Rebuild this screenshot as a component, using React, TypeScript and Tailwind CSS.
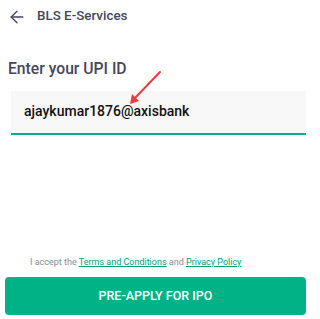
import { ArrowLeft } from 'lucide-react';

export default function App() {
  return (
    <div className="w-[311px] h-[319px] bg-white flex flex-col font-['Roboto',sans-serif] text-[#44475b] relative overflow-hidden">
      {/* Header */}
      <div className="flex items-center h-[33px] pl-[7px] gap-[10px]">
        <ArrowLeft className="w-[20px] h-[20px] text-[#44475b]" strokeWidth={1.6} />
        <span className="text-[13.4px] font-medium text-[#44475b]">BLS E-Services</span>
      </div>

      {/* Label */}
      <div className="mt-[24px] pl-[8px] text-[15.7px] font-medium text-[#44475b]">Enter your UPI ID</div>

      {/* Input */}
      <div className="mt-[10px] ml-[11px] mr-[5px] h-[44px] bg-[#f8f8f8] border-b-2 border-[#00b386] flex items-center pl-[13px]">
        <span className="text-[14px] font-medium text-[#121212]">ajaykumar1876@axisbank</span>
      </div>

      <div className="flex-1" />

      {/* Terms */}
      <div className="text-[9px] text-[#8a8c98] pl-[30px] mb-[8px]">
        I accept the <span className="text-[#00a07a] underline">Terms and Conditions</span> and{' '}
        <span className="text-[#00a07a] underline">Privacy Policy</span>
      </div>

      {/* Button */}
      <div className="mx-[5px] mb-[4px] h-[38px] rounded-[4px] bg-[#00b386] flex items-center justify-center">
        <span className="text-[12.5px] font-medium text-white">PRE-APPLY FOR IPO</span>
      </div>

      {/* Red annotation arrow */}
      <svg className="absolute left-0 top-0 pointer-events-none" width="311" height="319">
        <line x1="160" y1="72" x2="134" y2="99" stroke="#ef3b3b" strokeWidth="2" strokeLinecap="round" />
        <polygon points="130,104 132,94 139,101" fill="#ef3b3b" />
      </svg>
    </div>
  );
}
